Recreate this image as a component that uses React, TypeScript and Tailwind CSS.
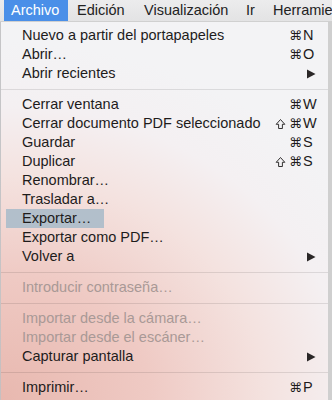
import React from "react";

type Item =
  | { type: "sep" }
  | {
      type: "item";
      label: string;
      mods?: string;
      key?: string;
      sub?: boolean;
      disabled?: boolean;
      hl?: boolean;
    };

const items: Item[] = [
  { type: "item", label: "Nuevo a partir del portapapeles", mods: "⌘", key: "N" },
  { type: "item", label: "Abrir…", mods: "⌘", key: "O" },
  { type: "item", label: "Abrir recientes", sub: true },
  { type: "sep" },
  { type: "item", label: "Cerrar ventana", mods: "⌘", key: "W" },
  { type: "item", label: "Cerrar documento PDF seleccionado", mods: "⇧", key: "W" },
  { type: "item", label: "Guardar", mods: "⌘", key: "S" },
  { type: "item", label: "Duplicar", mods: "⇧", key: "S" },
  { type: "item", label: "Renombrar…" },
  { type: "item", label: "Trasladar a…" },
  { type: "item", label: "Exportar…", hl: true },
  { type: "item", label: "Exportar como PDF…" },
  { type: "item", label: "Volver a", sub: true },
  { type: "sep" },
  { type: "item", label: "Introducir contraseña…", disabled: true },
  { type: "sep" },
  { type: "item", label: "Importar desde la cámara…", disabled: true },
  { type: "item", label: "Importar desde el escáner…", disabled: true },
  { type: "item", label: "Capturar pantalla", sub: true },
  { type: "sep" },
  { type: "item", label: "Imprimir…", mods: "⌘", key: "P" },
];

function ShiftIcon() {
  return (
    <svg width="11" height="12" viewBox="0 0 11 12" className="mr-[3px]">
      <path
        d="M5.5 1.5 L9.8 6.3 H7.4 V10.5 H3.6 V6.3 H1.2 Z"
        fill="none"
        stroke="#1e1c1c"
        strokeWidth="0.9"
        strokeLinejoin="round"
      />
    </svg>
  );
}

export default function App() {
  return (
    <div
      className="w-[332px] h-[400px] overflow-hidden flex flex-col text-[14.5px] leading-none"
      style={{ fontFamily: '"Liberation Sans", "DejaVu Sans", sans-serif' }}
    >
      <div className="h-[22px] shrink-0 flex items-stretch bg-[linear-gradient(#ececed,#e3e3e4)] text-[#222] whitespace-nowrap border-b border-[#d0d0d0]">
        <div className="ml-[4px] w-[64px] shrink-0 pl-[7px] flex items-center bg-[#4a8fe8] text-white">Archivo</div>
        <div className="w-[67px] shrink-0 pl-[9px] flex items-center">Edición</div>
        <div className="w-[102px] shrink-0 pl-[9px] flex items-center">Visualización</div>
        <div className="w-[27px] shrink-0 pl-[9px] flex items-center">Ir</div>
        <div className="shrink-0 pl-[9px] flex items-center">Herramientas</div>
      </div>
      <div className="flex flex-1 min-h-0">
        <div className="w-[328px] shrink-0 pt-[4px] border-l border-[#00000030] bg-[radial-gradient(130%_95%_at_0%_100%,#e8b8af_0%,#efcac4_35%,#f4e2df_62%,#f4f0f2_82%,#f3f3f5_100%)]">
          {items.map((it, i) =>
            it.type === "sep" ? (
              <div key={i} className="h-[12px] flex items-center">
                <div className="h-px w-full bg-[#0000001a]" />
              </div>
            ) : (
              <div key={i} className="relative h-[19px] flex items-center pl-[21px] pr-[11px]">
                {it.hl && (
                  <div className="absolute left-[5px] top-0 w-[98px] h-[19px] bg-[#b2bfcb]" />
                )}
                <span
                  className={
                    "relative flex-1 whitespace-nowrap " +
                    (it.disabled ? "text-[#a99996]" : "text-[#1e1c1c]")
                  }
                >
                  {it.label}
                </span>
                {it.key && (
                  <span
                    className="flex items-center text-[#1e1c1c] w-[50px] justify-end"
                    style={{ fontFamily: '"DejaVu Sans", sans-serif' }}
                  >
                    {it.mods === "⇧" && <ShiftIcon />}
                    <span className="text-[13px]">⌘</span>
                    <span
                      className="w-[15px] text-left pl-[1px]"
                      style={{ fontFamily: '"Liberation Sans", sans-serif' }}
                    >
                      {it.key}
                    </span>
                  </span>
                )}
                {it.sub && (
                  <svg width="10" height="10" viewBox="0 0 10 10" className="mr-[1px]">
                    <path d="M1 0.5 L9.5 5 L1 9.5 Z" fill="#2a2727" />
                  </svg>
                )}
              </div>
            )
          )}
        </div>
        <div className="flex-1 bg-[#cfcfcf]" />
      </div>
    </div>
  );
}
